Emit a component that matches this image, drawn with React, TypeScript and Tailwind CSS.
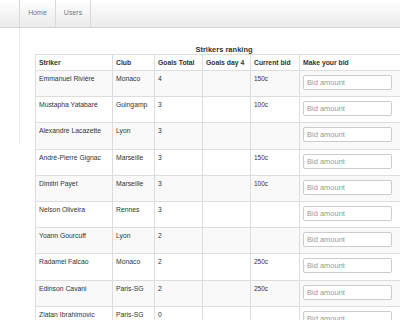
const strikers = [
  { name: "Emmanuel Rivière", club: "Monaco", total: "4", day: "", bid: "150c" },
  { name: "Mustapha Yatabaré", club: "Guingamp", total: "3", day: "", bid: "100c" },
  { name: "Alexandre Lacazette", club: "Lyon", total: "3", day: "", bid: "" },
  { name: "André-Pierre Gignac", club: "Marseille", total: "3", day: "", bid: "150c" },
  { name: "Dimitri Payet", club: "Marseille", total: "3", day: "", bid: "100c" },
  { name: "Nelson Oliveira", club: "Rennes", total: "3", day: "", bid: "" },
  { name: "Yoann Gourcuff", club: "Lyon", total: "2", day: "", bid: "" },
  { name: "Radamel Falcao", club: "Monaco", total: "2", day: "", bid: "250c" },
  { name: "Edinson Cavani", club: "Paris-SG", total: "2", day: "", bid: "250c" },
  { name: "Zlatan Ibrahimovic", club: "Paris-SG", total: "0", day: "", bid: "" },
];

const cols = [
  { label: "Striker", w: "w-[77px]" },
  { label: "Club", w: "w-[42px]" },
  { label: "Goals Total", w: "w-[48px]" },
  { label: "Goals day 4", w: "w-[48px]" },
  { label: "Current bid", w: "w-[49px]" },
  { label: "Make your bid", w: "w-[114px]" },
];

const cell = "border-l border-[#dddddd] px-[3px] pt-[4px] align-top text-left";

export default function App() {
  return (
    <div className="w-[400px] h-[320px] overflow-hidden bg-white text-[#333333] font-['Liberation_Sans',Arial,sans-serif]">
      <nav className="h-[28px] flex border-b border-[#d4d4d4] bg-gradient-to-b from-[#ffffff] to-[#ebebeb]">
        <div className="ml-[19px] flex border-l border-[#d9d9d9]">
          <a className="w-[36px] flex items-center justify-center border-r border-[#d9d9d9] text-[7px] text-[#777777]">
            Home
          </a>
          <a className="w-[35px] flex items-center justify-center border-r border-[#d9d9d9] text-[7px] text-[#777777]">
            Users
          </a>
        </div>
      </nav>
      <div className="flex">
        <div className="w-[20px] h-[116px] shrink-0 border-r border-[#eeeeee]" />
        <div className="pl-[15px] pt-[18px]">
          <div className="w-[378px] text-center text-[7.5px] font-bold leading-[8px]">
            Strikers ranking
          </div>
          <table className="w-[378px] table-fixed border-collapse border border-[#dddddd] text-[6.8px] leading-[8px]">
            <thead>
              <tr className="h-[16px]">
                {cols.map((c) => (
                  <th key={c.label} className={`${cell} ${c.w} font-bold`}>
                    {c.label}
                  </th>
                ))}
              </tr>
            </thead>
            <tbody>
              {strikers.map((s, i) => (
                <tr
                  key={s.name}
                  className={`h-[26.2px] border-t border-[#dddddd] ${i % 2 === 0 ? "bg-[#f9f9f9]" : "bg-white"}`}
                >
                  <td className={cell}>{s.name}</td>
                  <td className={cell}>{s.club}</td>
                  <td className={cell}>{s.total}</td>
                  <td className={cell}>{s.day}</td>
                  <td className={`${cell} text-[6.5px]`}>{s.bid}</td>
                  <td className={`${cell} pt-[3px]`}>
                    <input
                      placeholder="Bid amount"
                      className="w-[89px] h-[15px] rounded-[2px] border border-[#cccccc] bg-white px-[3px] text-[7.5px] placeholder-[#999999] outline-none"
                    />
                  </td>
                </tr>
              ))}
            </tbody>
          </table>
        </div>
      </div>
    </div>
  );
}
